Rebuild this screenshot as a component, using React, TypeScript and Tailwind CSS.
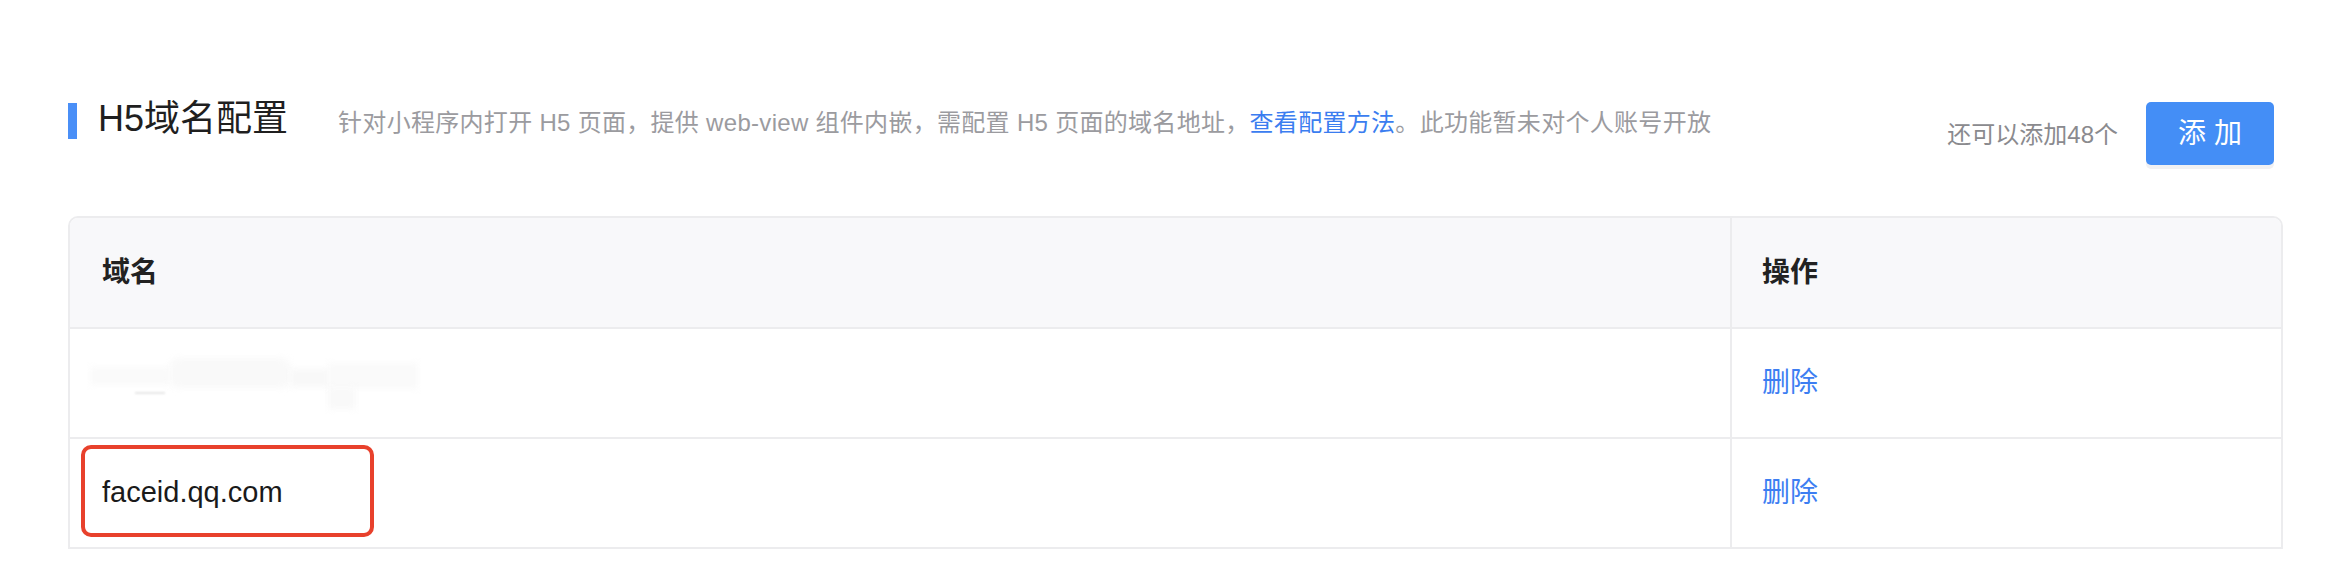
import React from "react";

const FONT = { fontFamily: '"Liberation Sans", "Noto Sans CJK SC", sans-serif' };

export default function App() {
  return (
    <div
      className="w-[2328px] h-[564px] bg-white pl-[68px] pr-[45px] pt-[101px] overflow-hidden"
      style={FONT}
    >
      {/* header */}
      <div className="flex items-start justify-between pr-[9px]">
        <div className="flex items-center">
          <div className="w-[9px] h-[36px] bg-[#4a8ff7]" />
          <div className="flex items-baseline ml-[21px]">
            <span className="text-[36px] leading-[36px] text-[#1f1f1f]">H5域名配置</span>
            <span className="ml-[50px] text-[24px] leading-[36px] tracking-[0.3px] text-[#9b9b9f]">
              针对小程序内打开 H5 页面，提供 web-view 组件内嵌，需配置 H5 页面的域名地址，
              <span className="text-[#3b7df0]">查看配置方法</span>。此功能暂未对个人账号开放
            </span>
          </div>
        </div>
        <div className="flex items-center mt-[1px]">
          <span className="text-[24px] text-[#8a8a8e] mt-[3px]">还可以添加48个</span>
          <button className="ml-[28px] w-[128px] h-[63px] rounded-[5px] bg-[#448ef6] text-white text-[28px] shadow-[0_4px_0_#f1f1f3]">
            添 加
          </button>
        </div>
      </div>

      {/* table */}
      <div className="mt-[51px] border-2 border-[#ececee] rounded-t-[10px] overflow-hidden">
        <div className="grid grid-cols-[1660px_551px] bg-[#f8f8fa] h-[111px] border-b-2 border-[#ececee]">
          <div className="flex items-center pl-[32px] text-[28px] font-bold text-[#222]">域名</div>
          <div className="flex items-center pl-[30px] border-l-2 border-[#ececee] text-[28px] font-bold text-[#222]">
            操作
          </div>
        </div>
        <div className="grid grid-cols-[1660px_551px] h-[110px] border-b-2 border-[#ececee]">
          <div className="relative">
            <div className="absolute left-[20px] top-[38px] w-[80px] h-[18px] bg-[#fafafa] blur-[3px]" />
            <div className="absolute left-[100px] top-[29px] w-[120px] h-[30px] bg-[#f9f9f9] blur-[3px] rounded-[8px]" />
            <div className="absolute left-[220px] top-[40px] w-[40px] h-[18px] bg-[#f8f8f8] blur-[3px]" />
            <div className="absolute left-[258px] top-[34px] w-[90px] h-[26px] bg-[#fafafa] blur-[3px]" />
            <div className="absolute left-[258px] top-[58px] w-[28px] h-[22px] bg-[#f9f9f9] blur-[3px]" />
            <div className="absolute left-[65px] top-[63px] w-[30px] h-[2px] bg-[#e6e6e6] blur-[1px]" />
          </div>
          <div className="flex items-center pl-[30px] border-l-2 border-[#ececee] text-[28px] text-[#3d7ef2]">
            删除
          </div>
        </div>
        <div className="grid grid-cols-[1660px_551px] h-[108px]">
          <div className="relative flex items-center pl-[32px] text-[29px] text-[#1a1a1a]">
            faceid.qq.com
            <div className="absolute left-[11px] top-[6px] w-[293px] h-[92px] border-4 border-[#e8412c] rounded-[10px]" />
          </div>
          <div className="flex items-center pl-[30px] border-l-2 border-[#ececee] text-[28px] text-[#3d7ef2]">
            删除
          </div>
        </div>
      </div>
    </div>
  );
}
